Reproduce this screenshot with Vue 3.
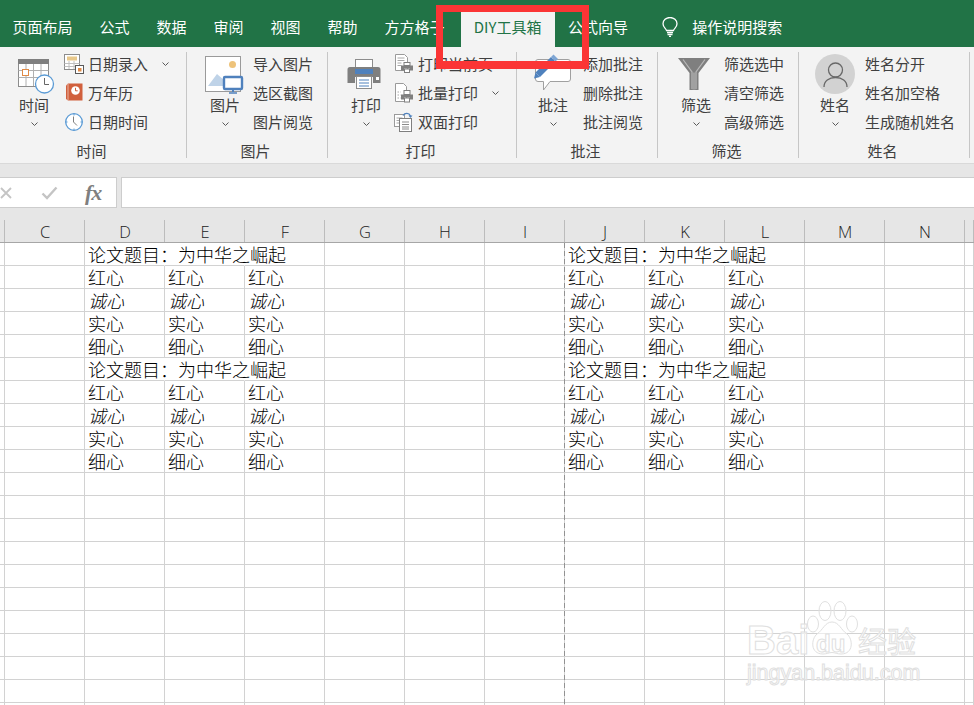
<script setup>
const letters = ['', 'C', 'D', 'E', 'F', 'G', 'H', 'I', 'J', 'K', 'L', 'M', 'N', '']
const words = ['论文题目：为中华之崛起', '红心', '诚心', '实心', '细心']
const dataCols = [2, 3, 4, 8, 9, 10]
const rows = Array.from({ length: 21 }, (_, r) =>
  letters.map((_, c) => {
    const kind = r % 5
    const has = r < 10 && dataCols.includes(c)
    const titleRow = has && kind === 0
    const start = c === 2 || c === 8
    return {
      id: r + '-' + c,
      text: has && (!titleRow || start) ? words[kind] : '',
      italic: has && kind === 2,
      joined: titleRow && c !== 4 && c !== 10
    }
  })
)
</script>

<template>
  <div class="app">
    <nav class="tabs">
      <span class="tab">页面布局</span>
      <span class="tab">公式</span>
      <span class="tab">数据</span>
      <span class="tab">审阅</span>
      <span class="tab">视图</span>
      <span class="tab">帮助</span>
      <span class="tab">方方格子</span>
      <span class="tab active">DIY工具箱</span>
      <span class="tab">公式向导</span>
      <span class="search">
        <svg width="18" height="20" viewBox="0 0 18 20" fill="none" stroke="#fff" stroke-width="1.3">
          <path d="M5.5 13.5C5.2 11.5 2 10.5 2 6.8a7 6.3 0 0 1 14 0c0 3.700-3.200 4.700-3.500 6.700z" />
          <path d="M6 15.500h6M6.500 17.500h5M8 19.300h2" />
        </svg>
        <span>操作说明搜索</span>
      </span>
    </nav>

    <section class="ribbon">
      <div class="group g1">
        <div class="body">
          <div class="big">
            <svg class="big-icon" viewBox="0 0 40 44">
              <rect x="4.500" y="9.500" width="30" height="27" fill="#fff" stroke="#8c8c8c" />
              <rect x="4" y="9" width="31" height="5" fill="#7f7f7f" />
              <path d="M4.500 20.500h30M4.500 27.500h30M12 14v22M19.500 14v22M27 14v22" stroke="#b0b0b0" fill="none" />
              <rect x="8.500" y="19.500" width="6" height="6" fill="#fff" stroke="#e08a45" />
              <circle cx="30.500" cy="34" r="9" fill="#fff" stroke="#5b9bd5" stroke-width="1.300" />
              <path d="M30.500 28v6.500h4.500" fill="none" stroke="#666" />
            </svg>
            <span class="big-label">时间</span>
            <svg class="chev" viewBox="0 0 7 4"><path d="M.5.500 3.500 3.500 6.500.500" /></svg>
          </div>
          <div class="list l1">
            <div class="item">
              <svg class="sm" viewBox="0 0 20 20">
                <rect x=".5" y=".5" width="15" height="15" fill="#fff" stroke="#8c8c8c" />
                <rect x="3" y="2.500" width="10" height="4" fill="#e8c88a" />
                <path d="M.5 9.500h15M.5 12.500h15M5 7v8M10 7v8" stroke="#c0c0c0" fill="none" />
                <rect x="11.500" y="11.500" width="8" height="8" fill="#fff" stroke="#595959" />
                <rect x="14" y="14" width="3.500" height="3.500" fill="#e08a45" />
              </svg>
              <span>日期录入</span>
              <svg class="chev inline" viewBox="0 0 7 4"><path d="M.5.500 3.500 3.500 6.500.500" /></svg>
            </div>
            <div class="item">
              <svg class="sm" viewBox="0 0 20 20">
                <path d="M2 2.500 4 .5h14.500v17H4l-2-1.500z" fill="#d1603d" />
                <path d="M4 1v16" stroke="#f3d8cf" stroke-width=".7" />
                <circle cx="11.500" cy="7.500" r="4.300" fill="#fff" />
                <path d="M11.500 4.800v3h2.200" fill="none" stroke="#d1603d" />
              </svg>
              <span>万年历</span>
            </div>
            <div class="item">
              <svg class="sm" viewBox="0 0 20 20">
                <circle cx="10" cy="10" r="8.300" fill="#fff" stroke="#5b9bd5" stroke-width="1.300" />
                <path d="M10 1.500v2M10 16.500v2M1.500 10h2M16.500 10h2" stroke="#5b9bd5" />
                <path d="M9.500 4.500V10l3.500 3.500" fill="none" stroke="#7f7f7f" />
              </svg>
              <span>日期时间</span>
            </div>
          </div>
        </div>
        <div class="label">时间</div>
      </div>
      <i class="sep"></i>

      <div class="group g2">
        <div class="body">
          <div class="big">
            <svg class="big-icon" viewBox="0 0 40 44">
              <rect x=".5" y="6.500" width="35" height="35" fill="#fff" stroke="#9a9a9a" />
              <circle cx="27.500" cy="14.500" r="3.500" fill="#eec37a" />
              <path d="M3 36 12 24 20 31 24 36z" fill="#bfd3e8" />
              <rect x="19" y="27" width="18" height="12" rx="1" fill="#fff" stroke="#4f81bd" stroke-width="2.400" />
              <path d="M28 39v3" stroke="#4f81bd" stroke-width="2" />
              <path d="M24 43h8" stroke="#4f81bd" stroke-width="1.500" />
            </svg>
            <span class="big-label">图片</span>
            <svg class="chev" viewBox="0 0 7 4"><path d="M.5.500 3.500 3.500 6.500.500" /></svg>
          </div>
          <div class="list l2">
            <div class="item"><span>导入图片</span></div>
            <div class="item"><span>选区截图</span></div>
            <div class="item"><span>图片阅览</span></div>
          </div>
        </div>
        <div class="label">图片</div>
      </div>
      <i class="sep"></i>

      <div class="group g3">
        <div class="body">
          <div class="big">
            <svg class="big-icon" viewBox="0 0 40 44">
              <rect x="9.500" y="9.500" width="17" height="13" fill="#fff" stroke="#8c8c8c" />
              <path d="M4 17h28a2.500 2.500 0 0 1 2.500 2.500V33H27v-6H9v6H1.500V19.500A2.500 2.500 0 0 1 4 17z" fill="#7f7f7f" />
              <rect x="9" y="19" width="18" height="5" fill="#4f81bd" />
              <rect x="30" y="27" width="3" height="3" fill="#fff" />
              <rect x="10.500" y="26.500" width="15" height="12" fill="#fff" stroke="#8c8c8c" />
              <path d="M13 30h10M13 33h10M13 36h10" stroke="#4f81bd" />
            </svg>
            <span class="big-label">打印</span>
            <svg class="chev" viewBox="0 0 7 4"><path d="M.5.500 3.500 3.500 6.500.500" /></svg>
          </div>
          <div class="list l3">
            <div class="item">
              <svg class="sm" viewBox="0 0 20 20">
                <path d="M1.500.5h9l3 3v13h-12z" fill="#fff" stroke="#9a9a9a" />
                <path d="M3.500 4h7M3.500 6.500h7M3.500 9h4M3.500 11.500h4" stroke="#a8a8a8" />
                <rect x="10" y="8.500" width="6" height="3" fill="#fff" stroke="#7f7f7f" />
                <path d="M7 11.500h12v5h-3v-2h-6v2H7z" fill="#7f7f7f" />
                <rect x="10.500" y="15" width="5" height="3.500" fill="#fff" stroke="#7f7f7f" />
              </svg>
              <span>打印当前页</span>
            </div>
            <div class="item">
              <svg class="sm" viewBox="0 0 20 20">
                <path d="M1.500.5h8l3 3v15h-11z" fill="#fff" stroke="#9a9a9a" />
                <path d="M3.500 9h3M3.500 12h3M3.500 15h3" stroke="#a8a8a8" stroke-dasharray="1.500 1" />
                <rect x="10" y="7.500" width="6" height="4" fill="#fff" stroke="#7f7f7f" />
                <path d="M7 11.500h12v5h-3v-2h-6v2H7z" fill="#7f7f7f" />
                <rect x="10.500" y="15" width="5" height="4" fill="#fff" stroke="#7f7f7f" />
              </svg>
              <span>批量打印</span>
              <svg class="chev inline" viewBox="0 0 7 4"><path d="M.5.500 3.500 3.500 6.500.500" /></svg>
            </div>
            <div class="item">
              <svg class="sm" viewBox="0 0 20 20">
                <rect x=".5" y="2.500" width="10" height="12" fill="#fff" stroke="#9a9a9a" />
                <path d="M2.500 6h6M2.500 8.500h6M2.500 11h6" stroke="#a8a8a8" />
                <rect x="5.500" y="6.500" width="12" height="13" fill="#fff" stroke="#7f7f7f" />
                <path d="M8 10h7M8 12.500h7M8 15h7M8 17h7" stroke="#8c8c8c" />
                <path d="M9 3.500C11 .5 15 .5 16.500 4" fill="none" stroke="#4f81bd" stroke-width="1.300" />
                <path d="M14.500 3.500h4l-2 2.500z" fill="#4f81bd" />
              </svg>
              <span>双面打印</span>
            </div>
          </div>
        </div>
        <div class="label">打印</div>
      </div>
      <i class="sep"></i>

      <div class="group g4">
        <div class="body">
          <div class="big">
            <svg class="big-icon" viewBox="0 0 40 44">
              <path d="M5 9.500h30a2.500 2.500 0 0 1 2.500 2.500v17a2.500 2.500 0 0 1-2.500 2.500H17L10.500 40v-8.500H5A2.500 2.500 0 0 1 2.500 29V12A2.500 2.500 0 0 1 5 9.500z" fill="#fff" stroke="#a0a0a0" />
              <path d="M2.500 22.500 18 7l4.500 4.500L7 27z" fill="#4f81bd" />
              <path d="M18 7l2.500-2.500 4.500 4.500-2.500 2.500z" fill="#7fa6d4" />
              <path d="M2.500 22.500 1 28.500l6-1.500z" fill="#4f81bd" />
            </svg>
            <span class="big-label">批注</span>
            <svg class="chev" viewBox="0 0 7 4"><path d="M.5.500 3.500 3.500 6.500.500" /></svg>
          </div>
          <div class="list l4">
            <div class="item"><span>添加批注</span></div>
            <div class="item"><span>删除批注</span></div>
            <div class="item"><span>批注阅览</span></div>
          </div>
        </div>
        <div class="label">批注</div>
      </div>
      <i class="sep"></i>

      <div class="group g5">
        <div class="body">
          <div class="big">
            <svg class="big-icon" viewBox="0 0 40 44">
              <path d="M2 8h32L22.500 23v17h-9V23z" fill="#7f7f7f" />
              <path d="M7 9.500 16 22v17M29 9.500 20 22v17" fill="none" stroke="#b8b8b8" stroke-width="1.200" />
              <path d="M16.500 22.500v17h3v-17z" fill="#a0a0a0" />
            </svg>
            <span class="big-label">筛选</span>
            <svg class="chev" viewBox="0 0 7 4"><path d="M.5.500 3.500 3.500 6.500.500" /></svg>
          </div>
          <div class="list l5">
            <div class="item"><span>筛选选中</span></div>
            <div class="item"><span>清空筛选</span></div>
            <div class="item"><span>高级筛选</span></div>
          </div>
        </div>
        <div class="label">筛选</div>
      </div>
      <i class="sep"></i>

      <div class="group g6">
        <div class="body">
          <div class="big">
            <svg class="big-icon" viewBox="0 0 40 44">
              <circle cx="20" cy="24" r="20" fill="#d2d2d2" />
              <circle cx="20.500" cy="20" r="7" fill="none" stroke="#686868" stroke-width="1.300" />
              <path d="M9 37c0-6 5-9.500 11.500-9.500S32 31 32 37" fill="none" stroke="#686868" stroke-width="1.300" />
            </svg>
            <span class="big-label">姓名</span>
            <svg class="chev" viewBox="0 0 7 4"><path d="M.5.500 3.500 3.500 6.500.500" /></svg>
          </div>
          <div class="list l6">
            <div class="item"><span>姓名分开</span></div>
            <div class="item"><span>姓名加空格</span></div>
            <div class="item"><span>生成随机姓名</span></div>
          </div>
        </div>
        <div class="label">姓名</div>
      </div>
      <i class="sep"></i>
    </section>

    <section class="formula">
      <div class="fbox names">
        <svg class="fx-x" width="12" height="12" viewBox="0 0 12 12"><path d="M1 1l10 10M11 1 1 11" stroke="#c4c4c4" stroke-width="1.800" /></svg>
        <svg class="fx-check" width="17" height="14" viewBox="0 0 17 14"><path d="M1.500 7.500 6 12 15.500 1.500" fill="none" stroke="#c4c4c4" stroke-width="2.400" /></svg>
        <span class="fx">fx</span>
      </div>
      <div class="fbox input"></div>
    </section>

    <section class="sheet">
      <div class="heads">
        <div v-for="(l, i) in letters" :key="i" class="head">{{ l }}</div>
      </div>
      <div v-for="(row, r) in rows" :key="r" class="row">
        <div
          v-for="cell in row"
          :key="cell.id"
          class="cell"
          :class="{ italic: cell.italic, joined: cell.joined }"
        >{{ cell.text }}</div>
      </div>
      <div class="page-break"></div>
      <div class="mark">
        <span class="mark-bai">Bai</span>
        <svg class="paw" width="52" height="56" viewBox="0 0 52 56" fill="none" stroke="#e0e0e0" stroke-width="1">
          <ellipse cx="7" cy="24" rx="5.500" ry="8" />
          <ellipse cx="19" cy="11" rx="6" ry="9.500" />
          <ellipse cx="34" cy="11" rx="6" ry="9.500" />
          <ellipse cx="46" cy="24" rx="5.500" ry="8" />
          <path d="M26 22c7 0 9 8 15 12 6 5 7 20-6 20-4 0-6-1.500-9-1.500S21 54 17 54C4 54 5 39 11 34c6-4 8-12 15-12z" fill="rgba(255,255,255,.55)" />
        </svg>
        <span class="mark-du">du</span>
        <span class="mark-jy">经验</span>
        <span class="mark-url">jingyan.baidu.com</span>
      </div>
    </section>

    <div class="highlight"></div>
  </div>
</template>

<style scoped>
.app {
  position: relative;
  width: 974px;
  height: 705px;
  overflow: hidden;
  background: #fff;
  font-family: "Noto Sans CJK SC", "Noto Sans", sans-serif;
}
.tabs {
  display: flex;
  align-items: flex-end;
  height: 47px;
  background: #217346;
  color: #fff;
  font-size: 15px;
}
.tab {
  height: 35px;
  line-height: 29px;
  padding: 0 13.5px;
  white-space: nowrap;
}
.tab:first-child { margin-left: -1px; }
.tab.active {
  width: 94px;
  margin-left: 2.5px;
  padding: 0;
  text-align: center;
  background: #f3f3f3;
  color: #217346;
}
.search {
  display: flex;
  align-items: center;
  gap: 13.5px;
  height: 35px;
  padding-bottom: 5px;
  box-sizing: border-box;
  margin-left: 19px;
}
.search span { line-height: 20px; }
.ribbon {
  display: flex;
  align-items: flex-start;
  height: 116px;
  background: #f3f3f3;
  border-bottom: 1px solid #d9d9d9;
  color: #404040;
  font-size: 15px;
}
.sep {
  flex: none;
  width: 1px;
  height: 106px;
  margin-top: 5px;
  background: #c6c6c6;
}
.group {
  flex: none;
  display: flex;
  flex-direction: column;
}
.g1 { width: 186px; }
.g2 { width: 140px; }
.g3 { width: 188px; }
.g4 { width: 140px; }
.g5 { width: 140px; }
.g6 { width: 170px; }
.body {
  display: flex;
  padding-top: 2px;
  box-sizing: border-box;
  height: 94px;
}
.g1 .body { padding-left: 14px; }
.g2 .body { padding-left: 18px; }
.g3 .body { padding-left: 18px; }
.g4 .body { padding-left: 16px; }
.g5 .body { padding-left: 18px; }
.g6 .body { padding-left: 16px; }
.big {
  flex: none;
  width: 40px;
  margin-top: 1px;
  display: flex;
  flex-direction: column;
  align-items: center;
}
.big-icon {
  width: 40px;
  height: 44px;
  overflow: visible;
  display: block;
}
.big-label {
  margin-top: 2px;
  line-height: 18px;
  white-space: nowrap;
}
.chev {
  width: 7px;
  height: 4px;
  margin-top: 8px;
  fill: none;
  stroke: #595959;
  stroke-width: 1;
  flex: none;
}
.chev.inline { margin: 0 0 0 14px; }
.list { display: flex; flex-direction: column; }
.l1 { margin-left: 10px; }
.l2 { margin-left: 8px; }
.l3 { margin-left: 8px; }
.l4 { margin-left: 10px; }
.l5 { margin-left: 8px; }
.l6 { margin-left: 10px; }
.item {
  display: flex;
  align-items: center;
  height: 29px;
  white-space: nowrap;
}
.sm {
  flex: none;
  width: 20px;
  height: 20px;
  margin-right: 4px;
}
.label {
  height: 20px;
  line-height: 20px;
  padding-right: 3px;
  text-align: center;
}
.formula {
  display: flex;
  gap: 4px;
  height: 56px;
  padding-top: 13px;
  box-sizing: border-box;
  background: #e6e6e6;
}
.fbox {
  height: 31px;
  background: #fff;
  border: 1px solid #cdcdcd;
  box-sizing: border-box;
}
.names {
  flex: none;
  width: 118px;
  margin-left: -1px;
  display: flex;
  align-items: center;
  overflow: hidden;
}
.fx-x { flex: none; }
.fx-check { margin-left: 29px; flex: none; }
.fx {
  margin-left: 27px;
  font: italic bold 22px "Liberation Serif", serif;
  letter-spacing: -1px;
  color: #7f7f7f;
}
.input { flex: 1; border-right: 0; }
.sheet { position: relative; }
.heads, .row {
  display: grid;
  grid-template-columns: 5px repeat(12, 80px) 9px;
}
.heads {
  height: 23px;
  background: #e6e6e6;
  border-bottom: 1px solid #a6a6a6;
  box-sizing: border-box;
}
.head {
  border-right: 1px solid #bcbcbc;
  padding-left: 1px;
  text-align: center;
  font: 300 16.500px/24px "Open Sans", sans-serif;
  color: #222;
  overflow: hidden;
}
.row {
  height: 23px;
  grid-template-rows: 23px;
}
.cell {
  border-right: 1px solid #d2d2d2;
  border-bottom: 1px solid #d2d2d2;
  box-sizing: border-box;
  padding: 3px 0 0 3px;
  font-family: "Liberation Sans", "Noto Sans CJK SC", sans-serif;
  font-size: 18px;
  font-weight: 300;
  line-height: 21px;
  color: #000;
  white-space: nowrap;
}
.cell.joined { border-right-color: transparent; }
.cell.italic { font-style: italic; }
.page-break {
  position: absolute;
  left: 564px;
  top: 23px;
  bottom: 0;
  width: 1px;
  background: repeating-linear-gradient(#929292 0 5px, transparent 5px 8px);
}
.mark {
  position: absolute;
  left: 747px;
  top: 380px;
  width: 180px;
  height: 84px;
  color: rgba(255, 255, 255, .6);
  -webkit-text-stroke: 1px #e0e0e0;
}
.mark span { position: absolute; white-space: nowrap; }
.paw { position: absolute; left: 59px; top: 0; }
.mark-bai { left: 0; top: 18px; font: bold 40px/44px "Liberation Sans", sans-serif; }
.mark-du { left: 69px; top: 30px; font: bold 24px/28px "Liberation Sans", sans-serif; }
.mark-jy { left: 111px; top: 22px; font: 29px/36px "Noto Sans CJK SC", sans-serif; }
.mark-url { left: 0; top: 60px; font: 21.500px/26px "Liberation Sans", sans-serif; }
.highlight {
  position: absolute;
  left: 436px;
  top: 5px;
  width: 153px;
  height: 64px;
  border: solid #fb3535;
  border-width: 7px 7px 8px;
  box-sizing: border-box;
}
</style>
